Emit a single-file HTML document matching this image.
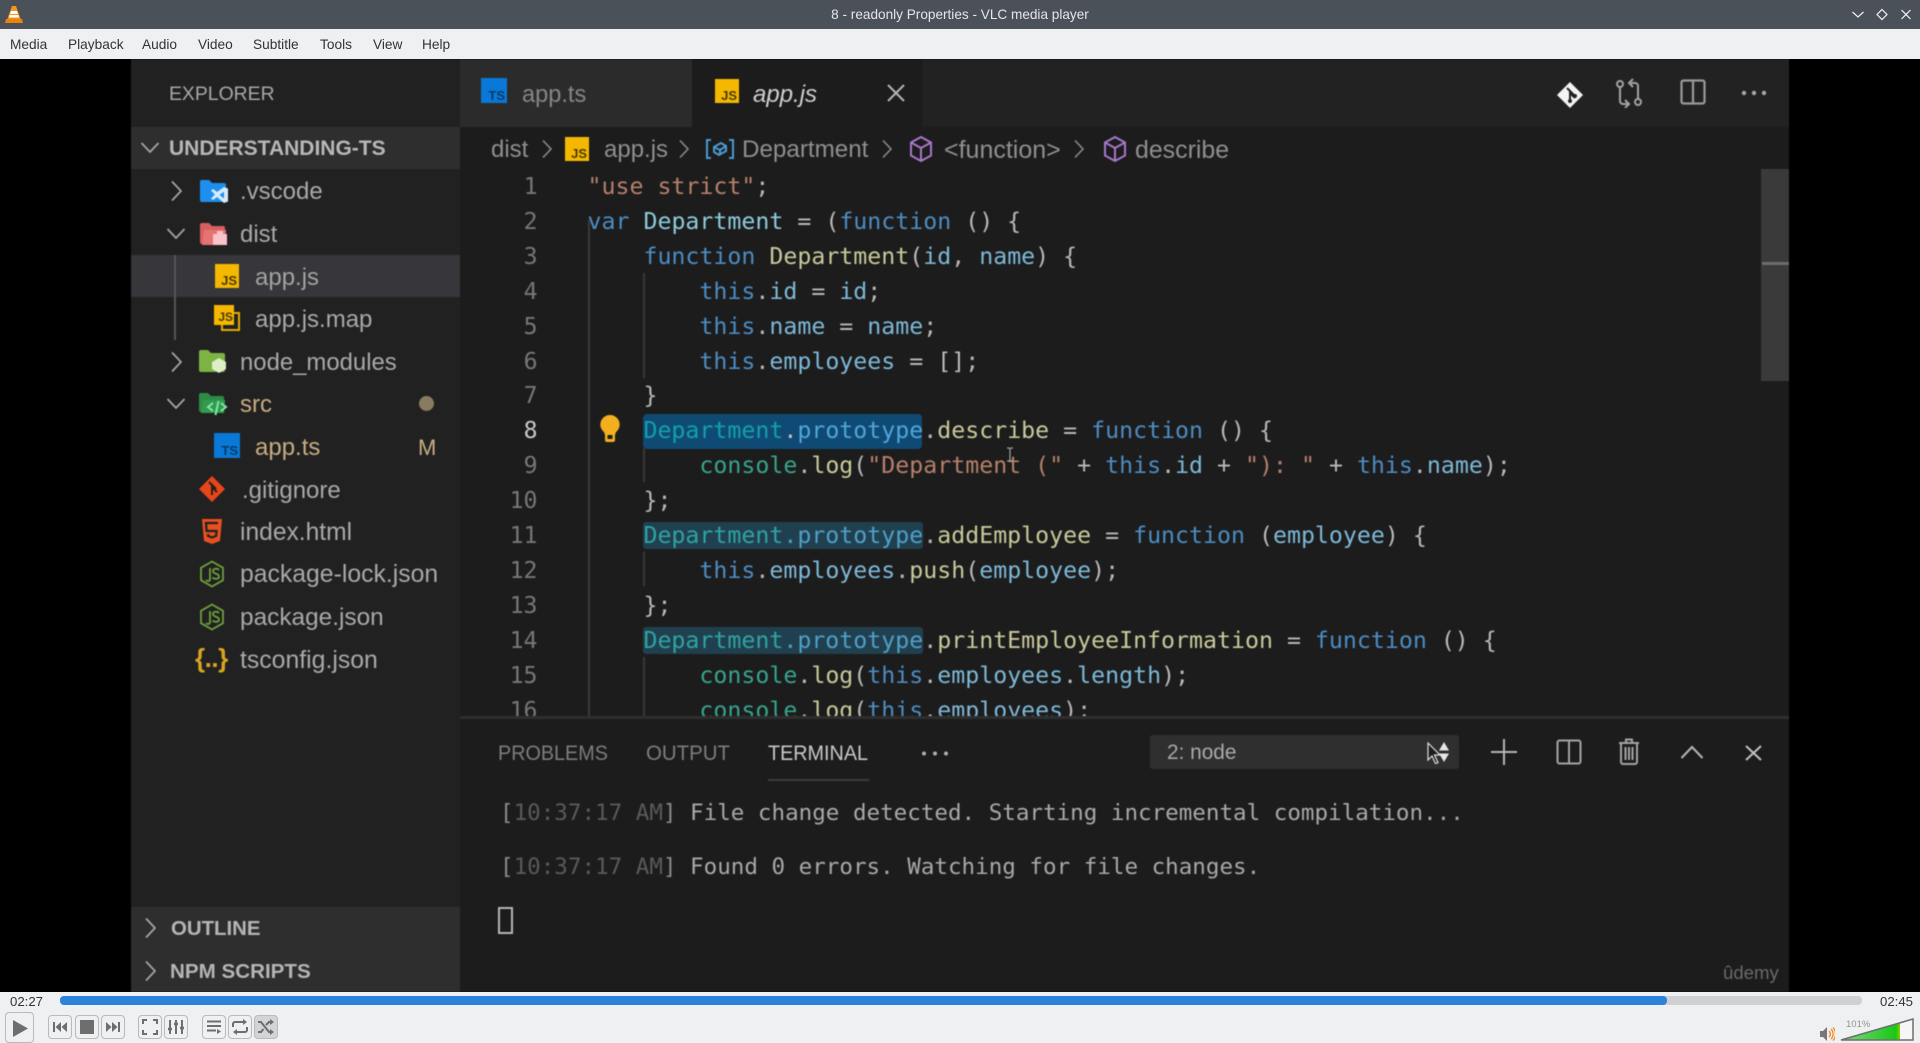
<!DOCTYPE html>
<html><head><meta charset="utf-8"><title>8 - readonly Properties - VLC media player</title>
<style>
html,body{margin:0;padding:0;width:1920px;height:1042px;overflow:hidden;background:#eff0f1;font-family:"Liberation Sans",sans-serif}
div,span,svg{box-sizing:border-box}
.a{position:absolute}
.t{position:absolute;white-space:pre;line-height:32px;height:32px}
#video{position:absolute;left:0;top:59px;width:1920px;height:933px;background:#000;overflow:hidden}
#vs{position:absolute;left:0;top:-59px;width:1920px;height:1042px;filter:blur(.6px)}
.tree{font-size:24px;color:#a9a9a9;margin-top:1px}
.code{position:absolute;left:587.5px;font:23.24px/34.9px "DejaVu Sans Mono","Liberation Mono",monospace;color:#b9b9b9;white-space:pre;height:34.9px}
.ln{position:absolute;left:481.5px;width:56px;text-align:right;font:23.15px/34.9px "DejaVu Sans Mono",monospace;color:#777;height:34.9px}
.k{color:#4c8cc2}.c{color:#8ccbdc}.f{color:#c9c99b}.v{color:#7db8d8}.s{color:#b5806a}.g{color:#35a48e}
.h{background:#21404f;color:#2ea3a3;border-radius:3px}.h i{font-style:normal;color:#4f9fc9}
.term{position:absolute;left:500px;font:22.55px/30px "DejaVu Sans Mono",monospace;color:#a8a8a8;white-space:pre;margin-top:1px}
.term b{font-weight:normal;color:#5a5a5a}.term u{text-decoration:none;color:#888}
.m{position:absolute;top:36px;font-size:13.7px;line-height:17px;color:#333}
.btn{position:absolute;top:1015px;height:24px;width:24px;border:1px solid #b9babb;border-radius:4px;background:#eff0f1}
.btn svg{position:absolute;left:3px;top:3px;width:16px;height:16px}
.bc{font-size:24px;color:#8f8f8f;margin-top:1px}
.pt{font-size:21.5px;transform:scaleX(.92);transform-origin:0 50%}
.js{position:absolute;background:#f5b800;color:#4a3a00;font:bold 12px/12px "Liberation Sans",sans-serif;text-align:right;padding:11px 2px 0 0}
.ts{position:absolute;background:#0a78d6;color:#053a6a;font:bold 13px/13px "Liberation Sans",sans-serif;text-align:right;padding:11px 2px 0 0}
</style></head><body>
<!-- title bar -->
<div class="a" style="left:0;top:0;width:1920px;height:29px;background:#4a5159"></div>
<svg class="a" style="left:5px;top:5px" width="18" height="19" viewBox="0 0 18 19"><path d="M7 1h4l5 14H2z" fill="#f7931e"/><path d="M6 6h6l1 3H5zM4.600 10h8.800l.6 2.500H4z" fill="#fff"/><path d="M1 14h16l1 4H0z" fill="#e8830c"/></svg>
<div class="a" style="left:0;top:5px;width:1920px;text-align:center;font-size:13.6px;line-height:20px;color:#e4e6e8">8 - readonly Properties - VLC media player</div>
<svg class="a" style="left:1850px;top:6px" width="64" height="17" viewBox="0 0 64 17" fill="none" stroke="#f2f3f4" stroke-width="1.200"><path d="M2.500 6l5.500 5 5.500-5"/><path d="M32 3.500l5 5-5 5-5-5z"/><path d="M51.500 4l9 9M60.500 4l-9 9"/></svg>
<!-- menu -->
<div class="a" style="left:0;top:29px;width:1920px;height:30px;background:#eff0f1"></div>
<span class="m" style="left:10px">Media</span><span class="m" style="left:68px">Playback</span><span class="m" style="left:142px">Audio</span><span class="m" style="left:198px">Video</span><span class="m" style="left:253px">Subtitle</span><span class="m" style="left:320px">Tools</span><span class="m" style="left:373px">View</span><span class="m" style="left:422px">Help</span>

<div id="video"><div id="vs">
<!-- backgrounds -->
<div class="a" style="left:131px;top:59px;width:329px;height:933px;background:#212121"></div>
<div class="a" style="left:460px;top:59px;width:1329px;height:933px;background:#1c1c1c"></div>
<div class="a" style="left:460px;top:59px;width:1329px;height:68px;background:#222"></div>
<div class="a" style="left:460px;top:59px;width:232px;height:68px;background:#2b2b2b"></div>
<div class="a" style="left:692px;top:59px;width:230px;height:68px;background:#1c1c1c"></div>
<div class="a" style="left:131px;top:127px;width:329px;height:42px;background:#2e2e2e"></div>
<div class="a" style="left:131px;top:255px;width:329px;height:42px;background:#36363b"></div>
<div class="a" style="left:131px;top:907px;width:329px;height:85px;background:#2e2e2e"></div>
<div class="a" style="left:174px;top:255px;width:2px;height:85px;background:#555"></div>

<!-- sidebar -->
<span class="t" style="left:169px;top:78px;font-size:19.4px;color:#a8a8a8">EXPLORER</span>
<span class="t" style="left:169px;top:133px;font-size:21px;font-weight:bold;color:#b8b8b8">UNDERSTANDING-TS</span>
<svg class="a" style="left:140px;top:141px" width="20" height="14" fill="none" stroke="#a8a8a8" stroke-width="1.700"><path d="M1.500 2l8.500 9 8.500-9"/></svg>
<svg class="a" style="left:170px;top:180px" width="14" height="22" fill="none" stroke="#a8a8a8" stroke-width="1.700"><path d="M2 1.500l9 9.500-9 9.500"/></svg>
<svg class="a" style="left:166px;top:227px" width="20" height="14" fill="none" stroke="#a8a8a8" stroke-width="1.700"><path d="M1.500 2l8.500 9 8.500-9"/></svg>
<svg class="a" style="left:170px;top:351px" width="14" height="22" fill="none" stroke="#a8a8a8" stroke-width="1.700"><path d="M2 1.500l9 9.500-9 9.500"/></svg>
<svg class="a" style="left:166px;top:397px" width="20" height="14" fill="none" stroke="#a8a8a8" stroke-width="1.700"><path d="M1.500 2l8.500 9 8.500-9"/></svg>
<svg class="a" style="left:144px;top:917px" width="14" height="22" fill="none" stroke="#a8a8a8" stroke-width="1.700"><path d="M2 1.500l9 9.500-9 9.500"/></svg>
<svg class="a" style="left:144px;top:960px" width="14" height="22" fill="none" stroke="#a8a8a8" stroke-width="1.700"><path d="M2 1.500l9 9.500-9 9.500"/></svg>

<!-- vscode folder -->
<svg class="a" style="left:199px;top:179px" width="30" height="25" viewBox="0 0 30 25"><path d="M1 3a2 2 0 012-2h7l3 3h12a2 2 0 012 2v15a2 2 0 01-2 2H3a2 2 0 01-2-2z" fill="#1e8fee"/><path d="M25 8l4 1.500v13L25 24l-7-6-4 3-2-1.500 4-4-4-4L14 10l4 3z" fill="#d6ebfb"/><path d="M25 12.500v7L20.500 16z" fill="#1e8fee"/></svg>
<span class="t tree" style="left:240px;top:175px">.vscode</span>
<!-- dist folder -->
<svg class="a" style="left:199px;top:222px" width="30" height="24" viewBox="0 0 30 24"><path d="M1 3a2 2 0 012-2h7l3 3h11a2 2 0 012 2v2H8l-3 14H3a2 2 0 01-2-2z" fill="#d65f5f"/><path d="M5 8h22l-1 15H3z" fill="#e57373"/><path d="M14 12h4v-3h6v3h4v11H14z" fill="#f9c3c9"/></svg>
<span class="t tree" style="left:240px;top:218px">dist</span>
<!-- app.js -->
<div class="js" style="left:215px;top:264px;width:24px;height:24px;font-size:13px">JS</div>
<span class="t tree" style="left:255px;top:261px;color:#a3a3a3">app.js</span>
<!-- app.js.map -->
<div class="a" style="left:221px;top:312px;width:19px;height:19px;border:2px solid #e5ab00"></div>
<div class="js" style="left:214px;top:305px;width:20px;height:20px;padding-top:6px;padding-right:1px">JS</div>
<span class="t tree" style="left:255px;top:303px">app.js.map</span>
<!-- node_modules -->
<svg class="a" style="left:198px;top:349px" width="30" height="25" viewBox="0 0 30 25"><path d="M1 3a2 2 0 012-2h7l3 3h12a2 2 0 012 2v15a2 2 0 01-2 2H3a2 2 0 01-2-2z" fill="#7cb342"/><path d="M21 9l7 4v7l-7 4-7-4v-7z" fill="#dcedc8"/></svg>
<span class="t tree" style="left:240px;top:346px;font-size:23.9px">node_modules</span>
<!-- src -->
<svg class="a" style="left:198px;top:392px" width="30" height="25" viewBox="0 0 30 25"><path d="M1 3a2 2 0 012-2h7l3 3h11a2 2 0 012 2v2H8l-3 12H3a2 2 0 01-2-2z" fill="#2e8b47"/><path d="M5 8h22l-1 13H3z" fill="#33994e"/><path d="M15 11l-5 4 5 4M23 11l5 4-5 4M20.500 9l-3 14" fill="none" stroke="#7fe8a8" stroke-width="2"/></svg>
<span class="t tree" style="left:240px;top:388px;color:#c8ad82">src</span>
<div class="a" style="left:419px;top:396px;width:15px;height:15px;border-radius:50%;background:#897b60"></div>
<!-- app.ts -->
<div class="ts" style="left:214px;top:433px;width:26px;height:25px">TS</div>
<span class="t tree" style="left:255px;top:431px;color:#c8ad82">app.ts</span>
<span class="t tree" style="left:418px;top:431px;color:#c8ad82;font-size:22px">M</span>
<!-- gitignore -->
<svg class="a" style="left:198px;top:475px" width="28" height="28" viewBox="0 0 28 28"><path d="M14 1l13 13-13 13L1 14z" fill="#e8451c"/><path d="M11 7l7 7M14 10v10M14 12l5 5" stroke="#221" stroke-width="2" fill="none"/></svg>
<span class="t tree" style="left:242px;top:474px">.gitignore</span>
<!-- html -->
<svg class="a" style="left:200px;top:518px" width="24" height="27" viewBox="0 0 24 27"><path d="M2 1h20l-2 22-8 3-8-3z" fill="#e8501f"/><path d="M18 5H6l.6 8h10l-.5 5-4 1.500-4-1.500-.2-2" fill="none" stroke="#212121" stroke-width="2.200"/></svg>
<span class="t tree" style="left:240px;top:516px;font-size:24.6px">index.html</span>
<!-- node json -->
<svg class="a" style="left:199px;top:560px" width="26" height="28" viewBox="0 0 26 28" fill="none" stroke="#6f9f3c" stroke-width="1.800"><path d="M13 1.500l11 6.300v12.400l-11 6.300-11-6.300V7.800z"/><path d="M11 8v11c0 2.500-3 2.500-4 1"/><path d="M20 10c-2-2.200-6-1.500-6 1 0 3.500 6 2 6 5.500 0 2.800-4.500 3-6.500 1"/></svg>
<span class="t tree" style="left:240px;top:558px;font-size:24.75px">package-lock.json</span>
<svg class="a" style="left:199px;top:603px" width="26" height="28" viewBox="0 0 26 28" fill="none" stroke="#6f9f3c" stroke-width="1.800"><path d="M13 1.500l11 6.300v12.400l-11 6.300-11-6.300V7.800z"/><path d="M11 8v11c0 2.500-3 2.500-4 1"/><path d="M20 10c-2-2.200-6-1.500-6 1 0 3.500 6 2 6 5.500 0 2.800-4.500 3-6.500 1"/></svg>
<span class="t tree" style="left:240px;top:601px;font-size:24.4px">package.json</span>
<span class="t" style="left:195px;top:642px;font-size:26px;font-weight:bold;color:#d9a520;letter-spacing:-.5px">{..}</span>
<span class="t tree" style="left:240px;top:644px;font-size:24.8px">tsconfig.json</span>
<span class="t" style="left:171px;top:913px;font-size:20.4px;font-weight:bold;color:#b5b5b5">OUTLINE</span>
<span class="t" style="left:170px;top:956px;font-size:20.6px;font-weight:bold;color:#b5b5b5">NPM SCRIPTS</span>

<!-- tabs -->
<div class="ts" style="left:481px;top:78px;width:26px;height:25px">TS</div>
<span class="t" style="left:522px;top:79px;font-size:23.6px;color:#868686">app.ts</span>
<div class="js" style="left:715px;top:79px;width:24px;height:24px;font-size:13px">JS</div>
<span class="t" style="left:753px;top:79px;font-size:24px;font-style:italic;color:#cfcfcf">app.js</span>
<svg class="a" style="left:887px;top:84px" width="18" height="18" fill="none" stroke="#b5b5b5" stroke-width="2"><path d="M1 1l16 16M17 1L1 17"/></svg>
<!-- editor actions -->
<svg class="a" style="left:1556px;top:81px" width="28" height="28" viewBox="0 0 28 28"><path d="M14 1l13 13-13 13L1 14z" fill="#f4f4f4"/><path d="M11 7l7 7M14 10v10M14 12l5 5" stroke="#222" stroke-width="2" fill="none"/><circle cx="14" cy="20" r="2" fill="#222"/><circle cx="19" cy="15" r="2" fill="#222"/></svg>
<svg class="a" style="left:1615px;top:78px" width="28" height="30" viewBox="0 0 28 30" fill="none" stroke="#a3a3a3" stroke-width="2"><circle cx="5" cy="6" r="3"/><circle cx="23" cy="24" r="3"/><path d="M5 9v14a3 3 0 003 3h5M10 22l4 4-4 4M23 21V8a3 3 0 00-3-3h-4M18 1l-4 4 4 4"/></svg>
<svg class="a" style="left:1680px;top:79px" width="26" height="26" fill="none" stroke="#9a9a9a" stroke-width="2.200"><rect x="1.500" y="1.500" width="23" height="23" rx="2"/><path d="M13 1v24"/></svg>
<svg class="a" style="left:1741px;top:90px" width="26" height="6" fill="#a8a8a8"><circle cx="3" cy="3" r="2.200"/><circle cx="13" cy="3" r="2.200"/><circle cx="23" cy="3" r="2.200"/></svg>

<!-- breadcrumbs -->
<span class="t bc" style="left:491px;top:133px">dist</span>
<svg class="a" style="left:541px;top:139px" width="12" height="20" fill="none" stroke="#8a8a8a" stroke-width="1.600"><path d="M2 1.500l8 8.500-8 8.500"/></svg>
<div class="js" style="left:565px;top:137px;width:24px;height:24px;font-size:13px">JS</div>
<span class="t bc" style="left:604px;top:133px">app.js</span>
<svg class="a" style="left:678px;top:139px" width="12" height="20" fill="none" stroke="#8a8a8a" stroke-width="1.600"><path d="M2 1.500l8 8.500-8 8.500"/></svg>
<svg class="a" style="left:705px;top:138px" width="30" height="22" viewBox="0 0 30 22" fill="none" stroke="#4a9ad4" stroke-width="2"><path d="M6 2H2v18h4M24 2h4v18h-4"/><path d="M9 14l0-5 7-4 5 3v5l-7 4z"/><path d="M9 9l6 3 6-4M15 12v4"/></svg>
<span class="t bc" style="left:742px;top:133px;font-size:24.2px">Department</span>
<svg class="a" style="left:881px;top:139px" width="12" height="20" fill="none" stroke="#8a8a8a" stroke-width="1.600"><path d="M2 1.500l8 8.500-8 8.500"/></svg>
<svg class="a" style="left:909px;top:135px" width="24" height="28" viewBox="0 0 24 28" fill="none" stroke="#a877c8" stroke-width="2"><path d="M12 2l10 5.500v13L12 26 2 20.500v-13z"/><path d="M2 7.500L12 13l10-5.500M12 13v13"/></svg>
<span class="t bc" style="left:944px;top:133px;font-size:25px">&lt;function&gt;</span>
<svg class="a" style="left:1073px;top:139px" width="12" height="20" fill="none" stroke="#8a8a8a" stroke-width="1.600"><path d="M2 1.500l8 8.500-8 8.500"/></svg>
<svg class="a" style="left:1103px;top:135px" width="24" height="28" viewBox="0 0 24 28" fill="none" stroke="#a877c8" stroke-width="2"><path d="M12 2l10 5.500v13L12 26 2 20.500v-13z"/><path d="M2 7.500L12 13l10-5.500M12 13v13"/></svg>
<span class="t bc" style="left:1135px;top:133px;font-size:24.9px">describe</span>

<!-- editor -->
<div class="a" style="left:460px;top:169px;width:1329px;height:548px;overflow:hidden">
<div class="a" style="left:128px;top:51px;width:2px;height:497px;background:#3a3a3a"></div>
<div class="a" style="left:183px;top:104px;width:2px;height:105px;background:#383838"></div>
<div class="a" style="left:183px;top:279px;width:2px;height:34px;background:#383838"></div>
<div class="a" style="left:183px;top:383px;width:2px;height:34px;background:#383838"></div>
<div class="a" style="left:183px;top:488px;width:2px;height:60px;background:#383838"></div>
<div style="position:absolute;left:-460px;top:-167.5px;width:1920px;height:720px">
<div class="ln" style="top:168.5px">1</div><div class="ln" style="top:203.4px">2</div><div class="ln" style="top:238.3px">3</div><div class="ln" style="top:273.2px">4</div><div class="ln" style="top:308.1px">5</div><div class="ln" style="top:343px">6</div><div class="ln" style="top:377.9px">7</div><div class="ln" style="top:412.8px;color:#c9c9c9">8</div><div class="ln" style="top:447.7px">9</div><div class="ln" style="top:482.6px">10</div><div class="ln" style="top:517.5px">11</div><div class="ln" style="top:552.4px">12</div><div class="ln" style="top:587.3px">13</div><div class="ln" style="top:622.2px">14</div><div class="ln" style="top:657.1px">15</div><div class="ln" style="top:692px">16</div>

<div class="code" style="top:168.5px"><span class="s">"use strict"</span>;</div>
<div class="code" style="top:203.4px"><span class="k">var</span> <span class="c">Department</span> = (<span class="k">function</span> () {</div>
<div class="code" style="top:238.3px">    <span class="k">function</span> <span class="f">Department</span>(<span class="v">id</span>, <span class="v">name</span>) {</div>
<div class="code" style="top:273.2px">        <span class="k">this</span>.<span class="v">id</span> = <span class="v">id</span>;</div>
<div class="code" style="top:308.1px">        <span class="k">this</span>.<span class="v">name</span> = <span class="v">name</span>;</div>
<div class="code" style="top:343px">        <span class="k">this</span>.<span class="v">employees</span> = [];</div>
<div class="code" style="top:377.9px">    }</div>
<div class="a" style="left:643px;top:412px;width:279px;height:35px;background:#0f4a74;border-radius:4px"></div>
<div class="code" style="top:412.8px">    <span style="color:#12a0ac">Department</span><span style="color:#c5c5c5">.</span><span style="color:#4fa6d8">prototype</span>.<span class="f">describe</span> = <span class="k">function</span> () {</div>
<div class="code" style="top:447.7px">        <span class="g">console</span>.<span class="f">log</span>(<span class="s">"Department (" </span>+ <span class="k">this</span>.<span class="v">id</span> + <span class="s">"): " </span>+ <span class="k">this</span>.<span class="v">name</span>);</div>
<div class="code" style="top:482.6px">    };</div>
<div class="code" style="top:517.5px">    <span class="h">Department<i>.prototype</i></span>.<span class="f">addEmployee</span> = <span class="k">function</span> (<span class="v">employee</span>) {</div>
<div class="code" style="top:552.4px">        <span class="k">this</span>.<span class="v">employees</span>.<span class="f">push</span>(<span class="v">employee</span>);</div>
<div class="code" style="top:587.3px">    };</div>
<div class="code" style="top:622.2px">    <span class="h">Department<i>.prototype</i></span>.<span class="f">printEmployeeInformation</span> = <span class="k">function</span> () {</div>
<div class="code" style="top:657.1px">        <span class="g">console</span>.<span class="f">log</span>(<span class="k">this</span>.<span class="v">employees</span>.<span class="v">length</span>);</div>
<div class="code" style="top:692px">        <span class="g">console</span>.<span class="f">log</span>(<span class="k">this</span>.<span class="v">employees</span>);</div>
</div></div>
<!-- text cursor -->
<svg class="a" style="left:1006px;top:447px" width="8" height="16" fill="none" stroke="#a0a0a0" stroke-width="1.200"><path d="M1 1h2l1 1 1-1h2M4 2v11M1 14h2l1-1 1 1h2"/></svg>
<!-- lightbulb -->
<svg class="a" style="left:599px;top:414px" width="22" height="29" viewBox="0 0 22 29"><path d="M11 1a9.500 9.500 0 00-6 17l1 3v5a2 2 0 002 2h6a2 2 0 002-2v-5l1-3a9.500 9.500 0 00-6-17z" fill="#f2b01e"/><rect x="8.500" y="21" width="5" height="4" fill="#1c1c1c"/></svg>
<!-- scrollbar -->
<div class="a" style="left:1761px;top:169px;width:28px;height:212px;background:#3a3a3a"></div>
<div class="a" style="left:1762px;top:262px;width:27px;height:3px;background:#6c6c6c"></div>

<!-- panel -->
<div class="a" style="left:460px;top:716px;width:1329px;height:3px;background:#2e2e2e"></div>
<span class="t pt" style="left:498px;top:737px;color:#7d7d7d">PROBLEMS</span>
<span class="t pt" style="left:646px;top:737px;color:#7d7d7d;transform:scaleX(.95)">OUTPUT</span>
<span class="t pt" style="left:768px;top:737px;color:#c9c9c9">TERMINAL</span>
<div class="a" style="left:768px;top:779px;width:101px;height:2px;background:#3d3d3d"></div>
<svg class="a" style="left:921px;top:751px" width="28" height="5" fill="#b0b0b0"><circle cx="3" cy="2.500" r="2"/><circle cx="14" cy="2.500" r="2"/><circle cx="25" cy="2.500" r="2"/></svg>
<div class="a" style="left:1150px;top:735px;width:309px;height:34px;background:#2f2f2f;border-radius:3px"></div>
<span class="t" style="left:1167px;top:737px;font-size:20.8px;color:#aaa">2: node</span>
<svg class="a" style="left:1425px;top:742px" width="26" height="25" viewBox="0 0 26 25"><path d="M19 0l5 8.500H14zM19 20l5-8.500H14z" fill="#e6e6e6"/><path d="M3 1v17l4-4 3.500 7.500 2.500-1-3.500-7.500H15z" fill="#1c1c1c" stroke="#e0e0e0" stroke-width="1.200"/></svg>
<svg class="a" style="left:1491px;top:739px" width="26" height="26" fill="none" stroke="#b5b5b5" stroke-width="2"><path d="M13 0v26M0 13h26"/></svg>
<svg class="a" style="left:1556px;top:739px" width="26" height="26" fill="none" stroke="#a3a3a3" stroke-width="2"><rect x="1.500" y="1.500" width="23" height="23" rx="2"/><path d="M13 1v24"/></svg>
<svg class="a" style="left:1618px;top:738px" width="22" height="27" viewBox="0 0 22 27" fill="none" stroke="#a3a3a3" stroke-width="2"><path d="M1 5h20M8 5V1.500h6V5M3 5v19a2 2 0 002 2h12a2 2 0 002-2V5M7.500 9v13M11 9v13M14.500 9v13"/></svg>
<svg class="a" style="left:1680px;top:745px" width="24" height="14" fill="none" stroke="#b5b5b5" stroke-width="2"><path d="M1.500 13L12 2l10.500 11"/></svg>
<svg class="a" style="left:1745px;top:745px" width="17" height="16" fill="none" stroke="#c0c0c0" stroke-width="2"><path d="M1 1l15 14M16 1L1 15"/></svg>

<div class="term" style="top:797px"><b style="color:#8a8a8a">[</b><b>10:37:17 AM</b><b style="color:#8a8a8a">]</b> File change detected. Starting incremental compilation...</div>
<div class="term" style="top:851px"><b style="color:#8a8a8a">[</b><b>10:37:17 AM</b><b style="color:#8a8a8a">]</b> Found 0 errors. Watching for file changes.</div>
<div class="a" style="left:498px;top:907px;width:15px;height:27px;border:2px solid #b5b5b5"></div>
<span class="t" style="left:1723px;top:957px;font-size:18.6px;color:#6a6a6a">ûdemy</span>
</div></div>

<!-- controls -->
<span class="a" style="left:10px;top:994px;font-size:13.2px;line-height:16px;color:#333">02:27</span>
<div class="a" style="left:60px;top:996px;width:1802px;height:9px;border-radius:4px;background:#cfd0d2"></div>
<div class="a" style="left:60px;top:996px;width:1607px;height:9px;border-radius:4px;background:#2a82da"></div>
<span class="a" style="left:1880px;top:994px;font-size:13.2px;line-height:16px;color:#333">02:45</span>

<div class="btn" style="left:5px;top:1012px;width:29px;height:31px"><svg style="left:6px;top:6px;width:17px;height:19px" viewBox="0 0 17 19"><path d="M1 1l15 8.500L1 18z" fill="#6e6e6e"/></svg></div>
<div class="btn" style="left:48px"><svg viewBox="0 0 16 16" style="left:3px;top:3px"><path d="M1 3h2v10H1zM9 3v10L3.500 8zM15 3v10L9.500 8z" fill="#6e6e6e"/></svg></div>
<div class="btn" style="left:75px"><svg viewBox="0 0 16 16"><rect x="1" y="1" width="14" height="14" fill="#6e6e6e"/></svg></div>
<div class="btn" style="left:101px"><svg viewBox="0 0 16 16"><path d="M13 3h2v10h-2zM7 3v10l5.500-5zM1 3v10l5.500-5z" fill="#6e6e6e"/></svg></div>
<div class="btn" style="left:138px"><svg viewBox="0 0 16 16" fill="none" stroke="#6e6e6e" stroke-width="2"><path d="M1 5V1h4M11 1h4v4M15 11v4h-4M5 15H1v-4"/></svg></div>
<div class="btn" style="left:164px"><svg viewBox="0 0 16 16" fill="none" stroke="#6e6e6e" stroke-width="2"><path d="M2 1v14M8 1v14M14 1v14"/><path d="M0 10h4M6 5h4M12 9h4" stroke-width="2.500"/></svg></div>
<div class="btn" style="left:202px"><svg viewBox="0 0 16 16" fill="none" stroke="#6e6e6e" stroke-width="2"><path d="M1 2.500h14M1 7h14M1 11.500h9"/><path d="M11 10l4 2.500-4 2.500z" fill="#6e6e6e" stroke="none"/></svg></div>
<div class="btn" style="left:228px"><svg viewBox="0 0 16 16" fill="none" stroke="#6e6e6e" stroke-width="2"><path d="M1 8V5a2 2 0 012-2h10M15 8v3a2 2 0 01-2 2H3"/><path d="M11 0l4 3-4 3zM5 10l-4 3 4 3z" fill="#6e6e6e" stroke="none"/></svg></div>
<div class="btn" style="left:254px;background:#d3d4d5"><svg viewBox="0 0 16 16" fill="none" stroke="#6e6e6e" stroke-width="2"><path d="M0 3h3l8 10h2M0 13h3l2.500-3M8 6l3-3h2"/><path d="M12 0l4 3-4 3zM12 10l4 3-4 3z" fill="#6e6e6e" stroke="none"/></svg></div>

<!-- volume -->
<svg class="a" style="left:1820px;top:1026px" width="15" height="16" viewBox="0 0 15 16"><path d="M0 5h3l4-4v14l-4-4H0z" fill="#777"/><path d="M9 5a4 4 0 010 6M11 3a7 7 0 010 10M13 1.500a9.500 9.500 0 010 13" fill="none" stroke="#f08a1d" stroke-width="1.300"/></svg>
<svg class="a" style="left:1840px;top:1018px" width="75" height="24" viewBox="0 0 75 24"><defs><linearGradient id="gv" x1="0" x2="1" y1="0" y2="0"><stop offset="0" stop-color="#7fd87f"/><stop offset=".93" stop-color="#18c818"/><stop offset="1" stop-color="#8fc800"/></linearGradient></defs><path d="M1 22L73 1v21z" fill="#f6f6f6"/><path d="M1 22L60 5v17z" fill="url(#gv)"/><path d="M1 22L73 1v21z" fill="none" stroke="#6f6f6f" stroke-width="1.500"/></svg>
<span class="a" style="left:1846px;top:1019px;font-size:9.5px;line-height:12px;color:#8f9498">101%</span>
</body></html>
